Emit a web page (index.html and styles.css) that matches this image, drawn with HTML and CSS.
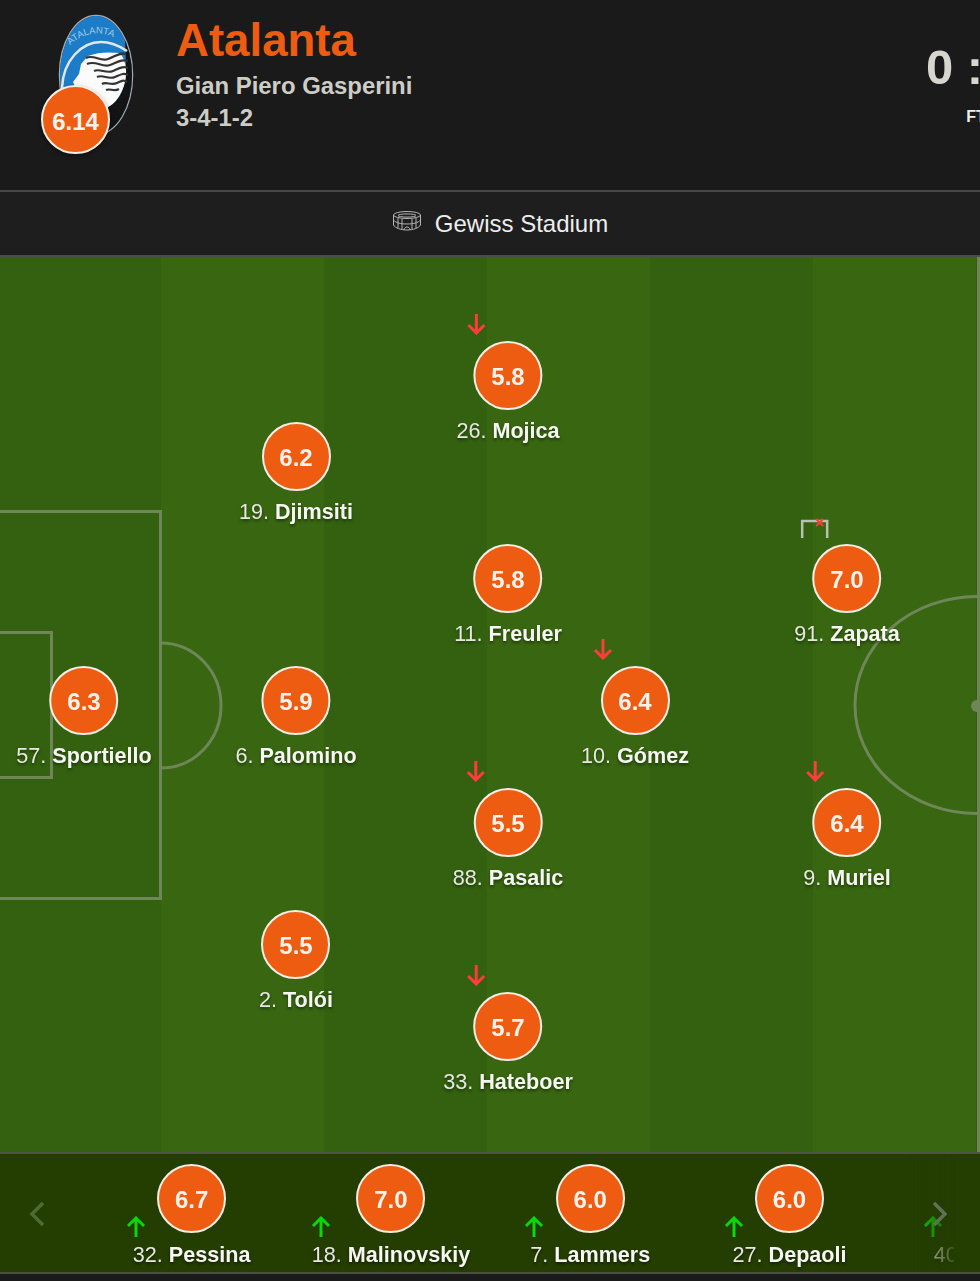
FILE: index.html
```html
<!DOCTYPE html>
<html lang="en">
<head>
    <meta charset="UTF-8">
    <meta name="viewport" content="width=device-width, initial-scale=1.0">
    <title>Atalanta lineup</title>
    <link rel="stylesheet" href="styles.css">
</head>
<body>

    <header class="team-header">
        <div class="team-logo">
            <svg class="crest" width="76" height="122" viewBox="0 0 76 122">
                <defs>
                    <clipPath id="crest-clip"><ellipse cx="38" cy="61" rx="36" ry="59"/></clipPath>
                </defs>
                <ellipse cx="38" cy="61" rx="36.500" ry="59.500" fill="#161616" stroke="#a8a8a8" stroke-width="1.500"/>
                <g clip-path="url(#crest-clip)">
                    <rect x="1" y="0" width="76" height="122" fill="#1c7cc8"/>
                    <path d="M67 26 L76 26 V122 H16 L40 102 L62 82 L68 50 Z" fill="#131313"/>
                    <path d="M4 74 C5 46 24 28 43 28 C52 28 60 31 69 37" fill="none" stroke="#dfe8ee" stroke-width="2.500"/>
                    <path d="M12 76 C14 54 30 37 48 36 L60 36 C70 48 70 70 60 84 C50 98 34 100 14 96 Z" fill="#1c7cc8"/>
                    <path d="M30 42 C40 38 50 38 62 39 C71 50 70 70 60 84 C52 96 36 100 14 96 L18 74 L15 68 L21 60 L23 50 Z" fill="#fbfbfb"/>
                    <g fill="none" stroke="#333" stroke-width="2.200">
                        <path d="M28 44 C36 40 42 48 50 45 S62 38 68 40"/>
                        <path d="M29 50 C38 46 44 54 52 51 S64 45 70 47"/>
                        <path d="M36 57 C42 54 48 60 55 57 S65 52 70 54"/>
                        <path d="M39 63 C45 60 50 66 57 63 S65 59 70 61"/>
                        <path d="M44 70 C48 67 53 72 59 69 S66 66 69 68"/>
                        <path d="M48 76 C52 74 56 78 61 75"/>
                    </g>
                    <path id="crest-text" d="M12 31 Q38 8 68 31" fill="none"/>
                    <text class="crest-text"><textPath href="#crest-text">ATALANTA</textPath></text>
                </g>
            </svg>
            <div class="rating rating-team">6.14</div>
        </div>
        <div class="team-info">
            <h1 class="team-name">Atalanta</h1>
            <div class="team-line">Gian Piero Gasperini</div>
            <div class="team-line">3-4-1-2</div>
        </div>
        <div class="score">
            <div class="score-value">0 : 0</div>
            <div class="score-status">FT</div>
        </div>
    </header>

    <div class="venue">
        <svg width="30" height="22" viewBox="0 0 30 22" fill="none" stroke="#b5b5b5" stroke-width="1">
            <ellipse cx="15" cy="5" rx="13.500" ry="3.500"/>
            <ellipse cx="15" cy="5.500" rx="9" ry="1.600"/>
            <path d="M1.500 5 V15 C3 18 9 20 15 20 C21 20 27 18 28.500 15 V5"/>
            <path d="M1.500 10 C4 13 9 14 15 14 C21 14 26 13 28.500 10"/>
            <path d="M6 8 V18 M10 9 V19 M20 9 V19 M24 8 V18"/>
            <path d="M12 20 C12 16 18 16 18 20"/>
        </svg>
        <span>Gewiss Stadium</span>
    </div>

    <section class="pitch">
        <svg class="pitch-lines" width="980" height="895" viewBox="0 0 980 895" fill="none">
            <path d="M0 254.500 H160.500 V641.500 H0"/>
            <path d="M0 375.500 H51.500 V520.500 H0"/>
            <path d="M161 386 A60 62.500 0 0 1 161 511"/>
            <ellipse cx="977" cy="448" rx="122" ry="108.500"/>
            <path d="M978.500 0 V895"/>
            <circle cx="977" cy="449" r="6" fill="#6f8758" stroke="none"/>
        </svg>

        <div class="player" style="left:508px;top:84px">
            <svg class="sub-arrow out" width="20" height="22" viewBox="0 0 20 22"><path d="M10 1 V20 M2 12 L10 20 L18 12"/></svg>
            <div class="rating">5.8</div>
            <div class="player-name">26. <b>Mojica</b></div>
        </div>
        <div class="player" style="left:296px;top:165px">
            <div class="rating">6.2</div>
            <div class="player-name">19. <b>Djimsiti</b></div>
        </div>
        <div class="player" style="left:508px;top:287px">
            <div class="rating">5.8</div>
            <div class="player-name">11. <b>Freuler</b></div>
        </div>
        <div class="player" style="left:847px;top:287px">
            <svg class="goal-missed" width="30" height="22" viewBox="0 0 30 22" fill="none">
                <path d="M2 20 V3 H27 V20" stroke="#b9c2ae" stroke-width="2.500"/>
                <path d="M16 1 L23 8 M23 1 L16 8" stroke="#ff3b3b" stroke-width="2"/>
            </svg>
            <div class="rating">7.0</div>
            <div class="player-name">91. <b>Zapata</b></div>
        </div>
        <div class="player" style="left:84px;top:409px">
            <div class="rating">6.3</div>
            <div class="player-name">57. <b>Sportiello</b></div>
        </div>
        <div class="player" style="left:296px;top:409px">
            <div class="rating">5.9</div>
            <div class="player-name">6. <b>Palomino</b></div>
        </div>
        <div class="player" style="left:635px;top:409px">
            <svg class="sub-arrow out" width="20" height="22" viewBox="0 0 20 22"><path d="M10 1 V20 M2 12 L10 20 L18 12"/></svg>
            <div class="rating">6.4</div>
            <div class="player-name">10. <b>Gómez</b></div>
        </div>
        <div class="player" style="left:508px;top:531px">
            <svg class="sub-arrow out" width="20" height="22" viewBox="0 0 20 22"><path d="M10 1 V20 M2 12 L10 20 L18 12"/></svg>
            <div class="rating">5.5</div>
            <div class="player-name">88. <b>Pasalic</b></div>
        </div>
        <div class="player" style="left:847px;top:531px">
            <svg class="sub-arrow out" width="20" height="22" viewBox="0 0 20 22"><path d="M10 1 V20 M2 12 L10 20 L18 12"/></svg>
            <div class="rating">6.4</div>
            <div class="player-name">9. <b>Muriel</b></div>
        </div>
        <div class="player" style="left:296px;top:653px">
            <div class="rating">5.5</div>
            <div class="player-name">2. <b>Tolói</b></div>
        </div>
        <div class="player" style="left:508px;top:735px">
            <svg class="sub-arrow out" width="20" height="22" viewBox="0 0 20 22"><path d="M10 1 V20 M2 12 L10 20 L18 12"/></svg>
            <div class="rating">5.7</div>
            <div class="player-name">33. <b>Hateboer</b></div>
        </div>
    </section>

    <section class="bench">
        <svg class="bench-nav nav-prev" width="16" height="26" viewBox="0 0 16 26"><path d="M14 2 L3 13 L14 24"/></svg>
        <div class="bench-list">
            <div class="bench-player">
                <div class="rating">6.7</div>
                <svg class="sub-arrow in" width="20" height="22" viewBox="0 0 20 22"><path d="M10 21 V2 M2 10 L10 2 L18 10"/></svg>
                <div class="player-name">32. <b>Pessina</b></div>
            </div>
            <div class="bench-player">
                <div class="rating">7.0</div>
                <svg class="sub-arrow in wide" width="20" height="22" viewBox="0 0 20 22"><path d="M10 21 V2 M2 10 L10 2 L18 10"/></svg>
                <div class="player-name">18. <b>Malinovskiy</b></div>
            </div>
            <div class="bench-player">
                <div class="rating">6.0</div>
                <svg class="sub-arrow in" width="20" height="22" viewBox="0 0 20 22"><path d="M10 21 V2 M2 10 L10 2 L18 10"/></svg>
                <div class="player-name">7. <b>Lammers</b></div>
            </div>
            <div class="bench-player">
                <div class="rating">6.0</div>
                <svg class="sub-arrow in" width="20" height="22" viewBox="0 0 20 22"><path d="M10 21 V2 M2 10 L10 2 L18 10"/></svg>
                <div class="player-name">27. <b>Depaoli</b></div>
            </div>
            <div class="bench-player cut-off">
                <div class="rating"></div>
                <svg class="sub-arrow in" width="20" height="22" viewBox="0 0 20 22"><path d="M10 21 V2 M2 10 L10 2 L18 10"/></svg>
                <div class="player-name">40.</div>
            </div>
        </div>
        <div class="bench-fade"></div>
        <svg class="bench-nav nav-next" width="16" height="26" viewBox="0 0 16 26"><path d="M3 2 L14 13 L3 24"/></svg>
    </section>

</body>
</html>
```

FILE: styles.css
```css
* {
    margin: 0;
    padding: 0;
    box-sizing: border-box;
}
body {
    font-family: "Liberation Sans", Arial, sans-serif;
    background-color: #1a1a1a;
    color: #eee;
    width: 980px;
    height: 1281px;
    overflow: hidden;
    filter: blur(0.35px);
}

/* header */
.team-header {
    display: flex;
    height: 192px;
    padding: 14px 0 0 58px;
    border-bottom: 2px solid #484848;
    background-color: #1a1a1a;
}
.team-logo {
    position: relative;
    width: 76px;
    height: 122px;
}
.crest {
    display: block;
}
.crest-text {
    font-size: 9.5px;
    fill: #9ccbea;
}
.team-info {
    margin-left: 42px;
}
.team-name {
    color: #ee5c12;
    font-size: 45.6px;
    font-weight: bold;
    line-height: 54px;
    margin-bottom: 2px;
}
.team-line {
    color: #cdcdc6;
    font-size: 23.9px;
    font-weight: bold;
    line-height: 32px;
}
.score {
    margin-left: auto;
    margin-right: -53px;
    padding-top: 25px;
    text-align: center;
    width: 116px;
}
.score-value {
    color: #d6d6cf;
    font-size: 49px;
    font-weight: bold;
    line-height: 56px;
}
.score-status {
    color: #eee;
    font-size: 16px;
    font-weight: bold;
    line-height: 20px;
    margin-top: 12px;
    margin-left: 2px;
}

/* venue */
.venue {
    display: flex;
    align-items: center;
    justify-content: center;
    gap: 13px;
    height: 65px;
    padding: 1px 0 0 20px;
    border-bottom: 2px solid #4c4c4c;
    background-color: #1e1e1e;
    font-size: 24px;
    color: #eee;
}
.venue svg {
    margin-top: -6px;
}

/* pitch */
.pitch {
    position: relative;
    height: 895px;
    overflow: hidden;
    background: repeating-linear-gradient(90deg, #33610f 0, #33610f 163px, #386611 163px, #386611 326px) -2px 0;
}
.pitch-lines {
    position: absolute;
    left: 0;
    top: 0;
    stroke: #6f8758;
    stroke-width: 3;
}
.player {
    position: absolute;
    display: flex;
    flex-direction: column;
    align-items: center;
    transform: translateX(-50%);
}
.rating {
    display: flex;
    align-items: center;
    justify-content: center;
    width: 69px;
    height: 69px;
    padding-top: 2px;
    border: 2px solid #f0efe8;
    border-radius: 50%;
    background-color: #ee5c12;
    color: #f6f2ec;
    font-size: 24px;
    font-weight: bold;
    flex-shrink: 0;
}
.rating-team {
    position: absolute;
    left: -17px;
    top: 71px;
    padding-top: 4px;
    box-shadow: 0 2px 4px rgba(0, 0, 0, 0.4);
}
.player-name {
    margin-top: 8px;
    font-size: 21.6px;
    line-height: 26px;
    white-space: nowrap;
    color: #e8e8e2;
    text-shadow: 0 2px 3px rgba(0, 0, 0, 0.45);
}
.player-name b {
    color: #f6f6f2;
}
.sub-arrow {
    position: absolute;
    fill: none;
    stroke-width: 3;
}
.sub-arrow.out {
    stroke: #ff3b3b;
    left: calc(50% - 42px);
    top: -28px;
}
.sub-arrow.in {
    stroke: #0bd70b;
    left: calc(50% - 66px);
    top: 52px;
}
.sub-arrow.in.wide {
    left: calc(50% - 80px);
}
.goal-missed {
    position: absolute;
    left: calc(50% - 47px);
    top: -26px;
}

/* bench */
.bench {
    position: relative;
    height: 122px;
    border-top: 2px solid #4d5447;
    border-bottom: 2px solid #4a4f44;
    background-color: #243d01;
}
.bench-list {
    display: flex;
    width: 954px;
    height: 118px;
    padding: 10px 0 0 92px;
    overflow: hidden;
}
.bench-player {
    position: relative;
    display: flex;
    flex-direction: column;
    align-items: center;
    flex: 0 0 199.3px;
}
.bench-player .player-name {
    margin-top: 9px;
}
.bench-player.cut-off .player-name {
    padding-right: 80px;
}
.bench-fade {
    position: absolute;
    right: 25px;
    top: 0;
    width: 45px;
    height: 118px;
    background: linear-gradient(90deg, rgba(36, 61, 1, 0), rgba(36, 61, 1, 0.88));
}
.bench-nav {
    position: absolute;
    top: 47px;
    fill: none;
    stroke: #4f6b35;
    stroke-width: 3.5;
}
.nav-prev {
    left: 29px;
}
.nav-next {
    left: 931px;
    stroke: #5f7256;
}
```
